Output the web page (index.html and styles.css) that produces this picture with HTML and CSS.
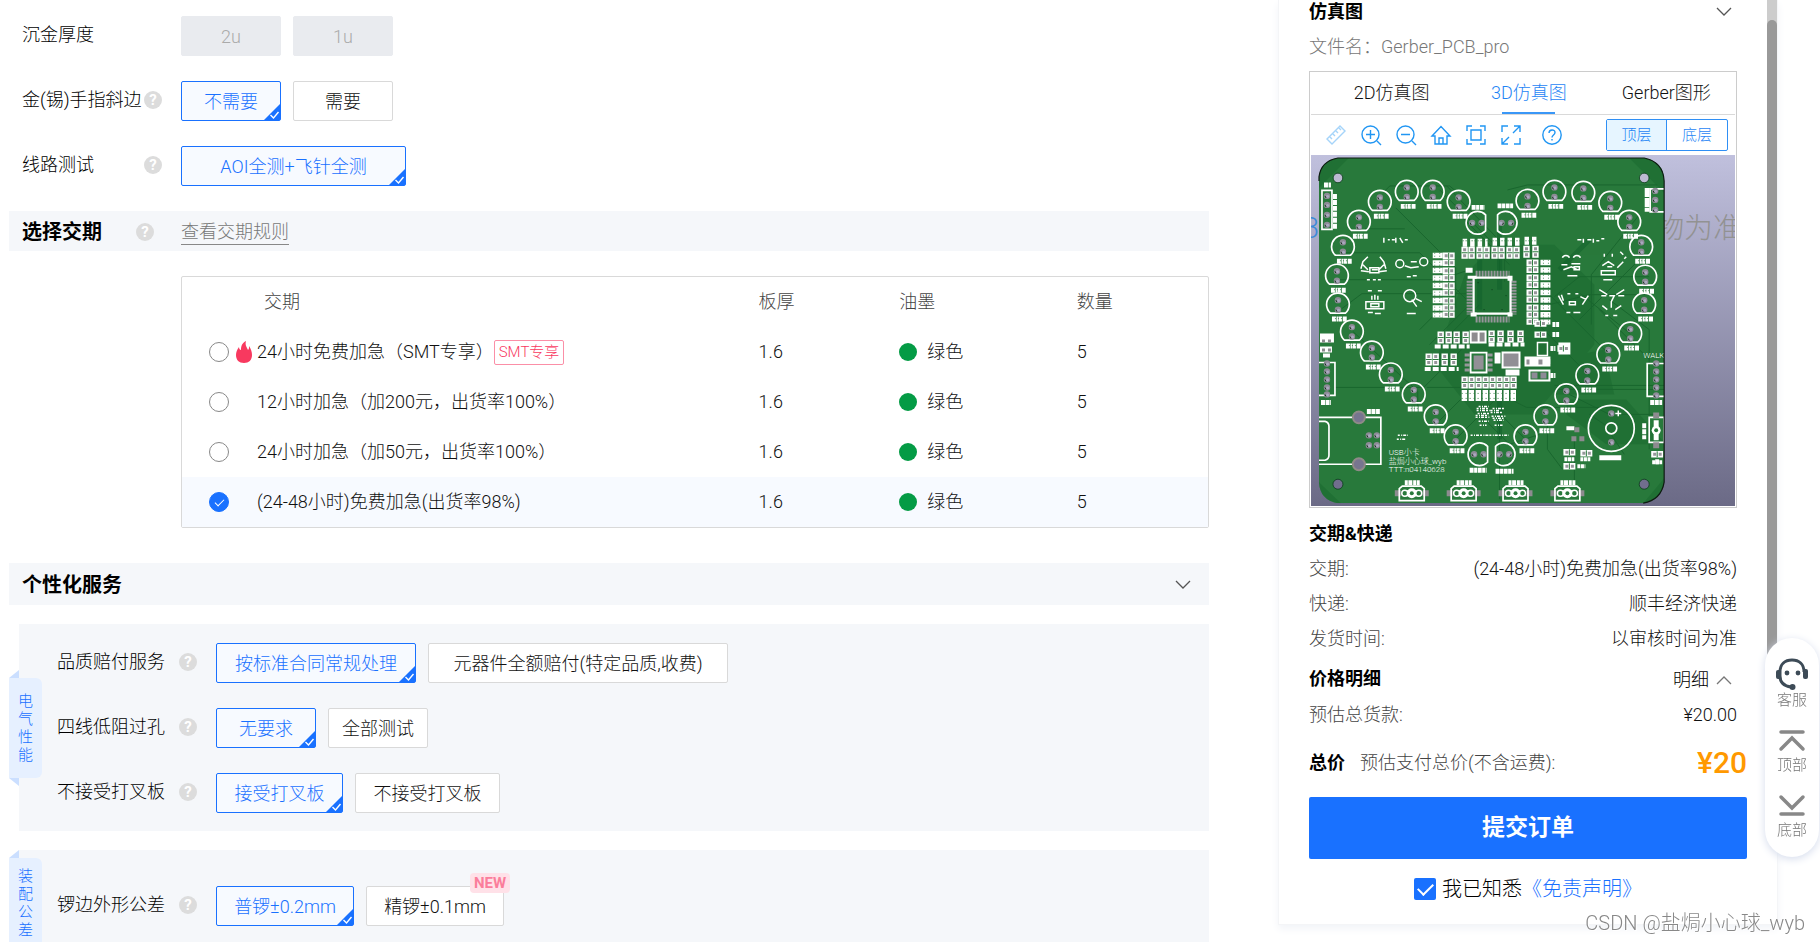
FILE: index.html
```html
<!DOCTYPE html>
<html lang="zh-CN">
<head>
<meta charset="utf-8">
<meta name="viewport" content="width=device-width, initial-scale=1">
<title>PCB 下单</title>
<link rel="stylesheet" href="styles.css">
</head>
<body>
<svg class="defs" aria-hidden="true">
  <symbol id="tick" viewBox="0 0 16 16"><path d="M16 0V16H0Z" fill="#1971ff"/><path d="M6.500 11l3 3 5-6" fill="none" stroke="#fff" stroke-width="1.400"/></symbol>
  <symbol id="down" viewBox="0 0 16 10"><path d="M1 1l7 7 7-7" fill="none" stroke="#555" stroke-width="1.300"/></symbol>
  <symbol id="up" viewBox="0 0 16 10"><path d="M1 9l7-7 7 7" fill="none" stroke="#777" stroke-width="1.300"/></symbol>
</svg>
<div class="page">
  <main class="form">
    <div class="rows">
      <div class="row">
        <div class="label"><span>沉金厚度</span></div>
        <button class="opt" disabled>2u</button><button class="opt" disabled>1u</button>
      </div>
      <div class="row">
        <div class="label"><span>金(锡)手指斜边</span><span class="tip">?</span></div>
        <button class="opt on">不需要<svg><use href="#tick"/></svg></button><button class="opt">需要</button>
      </div>
      <div class="row">
        <div class="label"><span>线路测试</span><span class="tip">?</span></div>
        <button class="opt wide on">AOI全测+飞针全测<svg><use href="#tick"/></svg></button>
      </div>
    </div>

    <div class="section first">
      <div class="heading"><h2>选择交期</h2><span class="tip">?</span></div>
      <a class="rules" href="#">查看交期规则</a>
    </div>

    <div class="lead">
      <table>
        <colgroup><col class="c1"><col class="c2"><col class="c3"><col></colgroup>
        <thead><tr><th>交期</th><th>板厚</th><th>油墨</th><th>数量</th></tr></thead>
        <tbody>
          <tr><td><label class="pick"><input type="radio" name="lead"><span class="slot"><svg class="flame" viewBox="0 0 16 22"><path d="M8 22C3 22 0 19 0 14C0 11 1 9 3 6C3 8 4 9 5 9C5 5 6 2 10 0C9 3 10 5 11 7L12 9C13 8 13 7 13 5C15 8 16 11 16 14C16 19 13 22 8 22Z" fill="#f8395f"/></svg></span>24小时免费加急（SMT专享）<span class="smt">SMT专享</span></label></td><td>1.6</td><td><span class="ink">绿色</span></td><td>5</td></tr>
          <tr><td><label class="pick"><input type="radio" name="lead"><span class="slot"></span>12小时加急（加200元，出货率100%）</label></td><td>1.6</td><td><span class="ink">绿色</span></td><td>5</td></tr>
          <tr><td><label class="pick"><input type="radio" name="lead"><span class="slot"></span>24小时加急（加50元，出货率100%）</label></td><td>1.6</td><td><span class="ink">绿色</span></td><td>5</td></tr>
          <tr class="chosen"><td><label class="pick"><input type="radio" name="lead" checked><span class="slot"></span>(24-48小时)免费加急(出货率98%)</label></td><td>1.6</td><td><span class="ink">绿色</span></td><td>5</td></tr>
        </tbody>
      </table>
    </div>

    <div class="section second">
      <h2>个性化服务</h2>
      <button class="fold" aria-label="收起"><svg class="chev"><use href="#down"/></svg></button>
    </div>

    <section class="panel">
      <div class="tag mid">电气性能</div>
      <div class="rows">
        <div class="row">
          <div class="label"><span>品质赔付服务</span><span class="tip">?</span></div>
          <button class="opt w200 on">按标准合同常规处理<svg><use href="#tick"/></svg></button><button class="opt w300">元器件全额赔付(特定品质,收费)</button>
        </div>
        <div class="row">
          <div class="label"><span>四线低阻过孔</span><span class="tip">?</span></div>
          <button class="opt on">无要求<svg><use href="#tick"/></svg></button><button class="opt">全部测试</button>
        </div>
        <div class="row">
          <div class="label"><span>不接受打叉板</span><span class="tip">?</span></div>
          <button class="opt w127 on">接受打叉板<svg><use href="#tick"/></svg></button><button class="opt w145">不接受打叉板</button>
        </div>
      </div>
    </section>

    <section class="panel tall">
      <div class="tag top">装配公差</div>
      <div class="rows">
        <div class="row">
          <div class="label"><span>锣边外形公差</span><span class="tip">?</span></div>
          <button class="opt w138 on">普锣±0.2mm<svg><use href="#tick"/></svg></button><button class="opt w138">精锣±0.1mm<span class="new">NEW</span></button>
        </div>
      </div>
    </section>
  </main>

  <aside class="card">
    <div class="bar"><div class="thumb"></div></div>
    <div class="inner">
      <div class="line"><h3>仿真图</h3><button class="fold side" aria-label="收起"><svg class="chev"><use href="#down"/></svg></button></div>
      <p class="file">文件名：Gerber_PCB_pro</p>
      <div class="viewer">
        <div class="tabs">
          <button>2D仿真图</button><button class="active">3D仿真图</button><button>Gerber图形</button>
        </div>
        <div class="tools">
          <div class="icons">
            <button class="faded" aria-label="测量"><svg viewBox="0 0 20 20"><path d="M1 14L14 1l5 5L6 19zM4 12l2 2M7 9l2 2M10 6l2 2M13 3l2 2"/></svg></button>
            <button aria-label="放大"><svg viewBox="0 0 20 20"><circle cx="9.500" cy="9.500" r="8.500"/><path d="M5 9.500h9M9.500 5v9M16 16l4 4"/></svg></button>
            <button aria-label="缩小"><svg viewBox="0 0 20 20"><circle cx="9.500" cy="9.500" r="8.500"/><path d="M5 9.500h9M16 16l4 4"/></svg></button>
            <button aria-label="首页"><svg viewBox="0 0 20 20"><path d="M1 11L10 1.500 19 11h-3v8H4v-8zM8 19v-6h4v6"/></svg></button>
            <button aria-label="适应"><svg viewBox="0 0 20 20"><path d="M1 6V1h5M14 1h5v5M19 14v5h-5M6 19H1v-5M5 5h10v10H5z"/></svg></button>
            <button aria-label="全屏"><svg viewBox="0 0 20 20"><path d="M1 7V1h6M13 1h6v6M19 13v6h-6M7 19H1v-6M19 1l-7 7M1 19l7-7"/></svg></button>
            <button class="gap" aria-label="帮助"><svg viewBox="0 0 20 20"><circle cx="10" cy="10" r="9.200"/><path d="M7 8c0-4 6-4 6-.500 0 2.500-3 2.500-3 5M10 14v1.500"/></svg></button>
          </div>
          <div class="layers"><button class="active">顶层</button><button>底层</button></div>
        </div>
        <svg class="board" viewBox="1311 155 425 352" role="img" aria-label="PCB 3D 仿真">
          <defs>
            <linearGradient id="sky" x1="0" y1="0" x2="0" y2="1"><stop offset="0" stop-color="#c0c0dd"/><stop offset="1" stop-color="#6b6a86"/></linearGradient>
            <g id="pad"><circle r="3.200" fill="#8d8b96"/><circle cx=".6" cy=".5" r="1.500" fill="#aaa8c0"/><path d="M-2 0l1 2" stroke="#18351f"/></g>
            <g id="cap"><path d="M-7.500 8.500A11.400 11.400 0 1 1 7.500 8.500Z" fill="none" stroke="#fff" stroke-width="1.700"/><use href="#pad" y="-4.500"/><use href="#pad" y="5"/></g>
            <g id="led"><use href="#cap"/><path d="M-6 14.500h15" stroke="#fff" stroke-width="5" stroke-dasharray="4 .6 2 .4 3 .8"/><path d="M-3 14h9" stroke="#28793b" stroke-width=".8" stroke-dasharray="1 2"/></g>
            <g id="ledR"><path d="M9 -8A11.400 11.400 0 1 0 9 8Z" fill="none" stroke="#fff" stroke-width="1.700"/><use href="#pad" x="-4.500"/><use href="#pad" x="5"/></g>
            <g id="resH"><path d="M-6-3.200H6V3.200H-6z" fill="#fff"/><path d="M-4-1.500h3v3h-3zM1.500-1.500h3v3h-3z" fill="#96969a"/><path d="M0-3v6" stroke="#28793b"/></g>
            <g id="resV"><path d="M-3.200-6H3.200V6H-3.200z" fill="#fff"/><path d="M-1.500-4.500h3v3h-3zM-1.500 1.500h3v3h-3z" fill="#96969a"/><path d="M-3 0h6" stroke="#28793b"/></g>
            <g id="key"><path d="M-17-3h6v6h-6zM11-3h6v6h-6z" fill="#8d8b8f"/><path d="M-12.500-4.500l3-2.500h19l3 2.500v12h-25z" fill="none" stroke="#fff" stroke-width="1.700"/><path d="M-8 0h16" stroke="#fff" stroke-width="6"/><circle cx="-7" r="3" fill="#28793b" stroke="#fff" stroke-width="1.500"/><circle r="5" fill="#fff"/><circle r="2" fill="#28793b"/><circle cx="7" r="3" fill="#28793b" stroke="#fff" stroke-width="1.500"/><path d="M-7-10.500H8" stroke="#fff" stroke-width="5" stroke-dasharray="3 .6 4 .8"/></g>
            <clipPath id="edge"><path d="M1338 158H1645Q1665 162 1665 181V483Q1662 501 1644 504H1338Q1320 501 1319 483V177Q1321 161 1338 158Z"/></clipPath>
          </defs>
          <rect x="1311" y="155" width="425" height="352" fill="url(#sky)"/>
          <text class="ghost blue" x="1303" y="238">3</text>
          <text class="ghost" x="1656" y="238">物为准</text>
          <g clip-path="url(#edge)">
            <rect x="1319" y="158" width="346" height="346" fill="#28793b"/>
            <path d="M1465 275l30-30h60l40 40v60l-60 70h-60l-40-50zM1567 400h60l40 45h-60l-40-30zM1319 158h30l-30 30zM1630 158h35v35zM1319 483l22 21h-22zM1644 504l21-25v25zM1555 360l50-10 10 45h-60z" fill="#196a30" opacity=".55"/>
            <g fill="none" stroke="#19662e" stroke-width="1">
              <path d="M1384 192l6-6h60l7 6M1396 208l60 60v40M1365 229h40M1345 253h75l50 50M1340 280h100l30-10M1342 309l20-15h110M1440 190l60 60v30M1447 186l58 60v36M1460 215l50 50M1508 190l20-5h130M1640 215l-48 60v50M1650 277h-70l-25 20M1650 295h-60l-40 10M1353 332l65 60v20M1334 388h90l50-50M1427 388h60l40 20h90M1420 330l40-40M1430 345l45-45M1435 350l45-45M1555 386h110M1555 390h110M1570 395l40 20h50M1590 376l-60-60M1610 355l-60-60M1631 334l-50-40M1580 320l60-60M1600 310l50 50M1480 415l30 30 30-10M1500 415v85M1548 420v30l15 20M1590 415l15 10 20 30M1575 440v45M1440 421l50-50M1456 440l45-45M1526 440l-30-30M1610 300l40 30v120"/>
            </g>
            <path d="M1500 220v70M1480 260v50M1590 240l-30 30M1500 390v50" stroke="#10602b" stroke-width="5" opacity=".5"/>
            <g fill="#bcbad2" stroke="#0b3b1b" stroke-width=".8"><circle cx="1338" cy="178" r="4.800"/><circle cx="1645" cy="178" r="4.800"/><g fill="#706e8d"><circle cx="1338" cy="485" r="5"/><circle cx="1645" cy="485" r="5"/></g></g>
            <use href="#led" x="1380" y="202"/><use href="#led" x="1407" y="192"/><use href="#led" x="1433" y="192"/><use href="#led" x="1459" y="202"/><use href="#led" x="1359" y="222"/><use href="#led" x="1343" y="247"/><use href="#led" x="1337" y="276"/><use href="#led" x="1338" y="305"/><use href="#led" x="1352" y="332"/><use href="#led" x="1372" y="353"/><use href="#led" x="1391" y="375"/><use href="#led" x="1414" y="395"/><use href="#led" x="1436" y="417"/><use href="#led" x="1456" y="437"/>
            <use href="#led" x="1528" y="201"/><use href="#led" x="1555" y="192"/><use href="#led" x="1584" y="193"/><use href="#led" x="1611" y="203"/><use href="#led" x="1630" y="222"/><use href="#led" x="1642" y="247"/><use href="#led" x="1646" y="277"/><use href="#led" x="1645" y="305"/><use href="#led" x="1631" y="334"/><use href="#led" x="1609" y="355"/><use href="#led" x="1588" y="376"/><use href="#led" x="1567" y="396"/><use href="#led" x="1546" y="417"/><use href="#led" x="1526" y="437"/>
            <use href="#ledR" x="1477" y="223"/><use href="#ledR" transform="translate(1507 223) scale(-1 1)"/><use href="#ledR" x="1479" y="455"/><use href="#ledR" transform="translate(1505 455) scale(-1 1)"/>
            <path d="M1472 207.500h13M1498 206h16M1470 471h17M1496 472h18" stroke="#fff" stroke-width="5" stroke-dasharray="4 .5 3 .6"/>
            <!-- left header and USB socket -->
            <g fill="none" stroke="#fff" stroke-width="1.700"><path d="M1322 190.500h10v39h-10z"/><path d="M1319 363h16v33h-16M1319 418h62v47h-62M1319 422h6q4 1 4 5v29q0 4-4 5h-6"/><path d="M1665 189h-14v23h14M1665 364h-17v33h17M1650 418h15v25h-15z"/><circle cx="1612" cy="429" r="23"/><circle cx="1612" cy="429" r="5.500"/></g>
            <path d="M1324 185h7M1321 403h10M1367 412h13M1651 403h12" stroke="#fff" stroke-width="5" stroke-dasharray="4 .6"/><path d="M1648 188v24" stroke="#fff" stroke-width="5" stroke-dasharray="9 1"/>
            <path d="M1335 194v36M1645 424v16M1658 460v6" stroke="#fff" stroke-width="4" stroke-dasharray="5 1"/>
            <path d="M1320 334h14v9h-14zM1320 347h12v6h-12zM1323 354h7v4h-7z" fill="#fff"/><path d="M1322 340h3v3h-3zM1328 340h3v3h-3zM1322 349h3v3h-3zM1328 349h3v3h-3z" fill="#8d8b8f"/>
            <use href="#pad" x="1327" y="196"/><use href="#pad" x="1327" y="205"/><use href="#pad" x="1327" y="215"/><use href="#pad" x="1327" y="225"/><use href="#pad" x="1327" y="364"/><use href="#pad" x="1327" y="372"/><use href="#pad" x="1327" y="380"/><use href="#pad" x="1327" y="388"/><use href="#pad" x="1327" y="395"/>
            <use href="#pad" x="1656" y="191"/><use href="#pad" x="1656" y="200"/><use href="#pad" x="1656" y="210"/><use href="#pad" x="1657" y="364"/><use href="#pad" x="1657" y="372"/><use href="#pad" x="1657" y="380"/><use href="#pad" x="1657" y="388"/><use href="#pad" x="1657" y="396"/>
            <g fill="#77758f" stroke="#8f8a87" stroke-width="2"><circle cx="1359" cy="418" r="6"/><circle cx="1359" cy="465" r="6"/></g>
            <use href="#pad" x="1369" y="436"/><use href="#pad" x="1377" y="436"/><use href="#pad" x="1369" y="446"/><use href="#pad" x="1377" y="446"/><use href="#pad" x="1612" y="414"/><use href="#pad" x="1612" y="443"/>
            <path d="M1616 414h6M1619 411v6" stroke="#fff" stroke-width="1.500"/><path d="M1600 458.500h22" stroke="#fff" stroke-width="5"/>
            <path d="M1654 413h6v6h-6zM1654 443h6v6h-6z" fill="#8d8b8f"/><path d="M1657 421v20" stroke="#fff" stroke-width="5"/><circle cx="1657" cy="431" r="4.500" fill="#fff"/><circle cx="1657" cy="431" r="2" fill="#28793b"/>
            <!-- microcontroller -->
            <path d="M1476 274h34M1476 320h34" stroke="#96969a" stroke-width="6" stroke-dasharray="2 1"/><path d="M1470 281v34M1514 281v34" stroke="#96969a" stroke-width="6" stroke-dasharray="2 1"/>
            <path d="M1474 278h37v36h-37z" fill="none" stroke="#fff" stroke-width="2.200"/><path d="M1468 276h9v3h-9zM1508 276h5v5h-5zM1471 313h6v4h-6zM1508 313h5v4h-5zM1466 268h7v5h-7z" fill="#fff"/>
            <path d="M1478 283h1M1492 290h1M1506 296h1M1484 310h1M1502 310h1" stroke="#0b3b1b"/>
            <!-- resistor banks -->
            <use href="#resV" x="1465" y="253"/><use href="#resV" x="1472" y="253"/><use href="#resV" x="1480" y="253"/><use href="#resV" x="1487" y="253"/><use href="#resV" x="1495" y="253"/><use href="#resV" x="1502" y="253"/><use href="#resV" x="1510" y="253"/><use href="#resV" x="1517" y="253"/><use href="#resV" x="1527" y="252"/><use href="#resV" x="1536" y="252"/>
            <path d="M1463 243h25M1493 242h28M1525 241h13" stroke="#fff" stroke-width="8" stroke-dasharray="4.500 3"/><path d="M1463 241h75" stroke="#28793b" stroke-width="1" stroke-dasharray="1 2"/>
            <g id="bank"><use href="#resH" x="1449" y="256"/><use href="#resH" x="1449" y="263"/><use href="#resH" x="1449" y="271"/><use href="#resH" x="1449" y="278"/><use href="#resH" x="1449" y="286"/><use href="#resH" x="1449" y="293"/><use href="#resH" x="1449" y="301"/><use href="#resH" x="1449" y="308"/><use href="#resH" x="1449" y="315"/></g>
            <use href="#bank" x="84" y="7"/>
            <path d="M1438 253v65M1546 260v65" stroke="#fff" stroke-width="10" stroke-dasharray="5.500 2"/><path d="M1435 253v65M1440 253v65M1544 260v65M1549 260v65" stroke="#28793b" stroke-width=".8" stroke-dasharray="1 2"/>
            <use href="#resV" x="1441" y="338"/><use href="#resV" x="1449" y="338"/><use href="#resV" x="1457" y="338"/><use href="#resV" x="1466" y="338"/><use href="#resV" x="1492" y="337"/><use href="#resV" x="1501" y="337"/><use href="#resV" x="1511" y="337"/><use href="#resV" x="1521" y="337"/>
            <use href="#resV" x="1429" y="360"/><use href="#resV" x="1436" y="360"/><use href="#resV" x="1445" y="360"/><use href="#resV" x="1454" y="360"/>
            <path d="M1435 347h35M1489 345h36M1425 369.500h34" stroke="#fff" stroke-width="4" stroke-dasharray="6 2"/>
            <path d="M1470 331h17v13h-17z" fill="#fff"/><path d="M1472 333h6v9h-6zM1480 333h5v9h-5z" fill="#8d8b8f"/>
            <path d="M1467.500 354v18M1490.500 354v18" stroke="#96969a" stroke-width="5" stroke-dasharray="3 2"/><path d="M1471 353h16v20h-16z" fill="#28793b" stroke="#fff" stroke-width="1.800"/><path d="M1474 356h10v14h-10z" fill="#929096"/>
            <path d="M1502 352h19v17h-19zM1495 353h6v11h-6zM1506 370h14v6h-14zM1525 357h26v10h-26zM1529 370h22v12h-22z" fill="#fff"/><path d="M1504 354h15v13h-15zM1527 360h3v5h-3zM1539 360h4v5h-4z" fill="#918f95"/><path d="M1531 372h18v8h-18z" fill="#28793b"/><path d="M1532 373h6v6h-6zM1541 373h6v6h-6z" fill="#8d8b96"/>
            <use href="#resH" x="1541" y="324"/><use href="#resH" x="1541" y="335"/><path d="M1538 343h10v13h-10z" fill="none" stroke="#fff" stroke-width="1.500"/><path d="M1553 325h7M1553 335h7M1551 349h5M1544 362h7M1551 376h5" stroke="#fff" stroke-width="5" stroke-dasharray="3 .7"/><path d="M1559 343h12v12h-12z" fill="#fff"/><use href="#resH" x="1564" y="349"/>
            <use href="#resV" x="1465" y="383"/><use href="#resV" x="1472" y="383"/><use href="#resV" x="1479" y="383"/><use href="#resV" x="1486" y="383"/><use href="#resV" x="1493" y="383"/><use href="#resV" x="1500" y="383"/><use href="#resV" x="1507" y="383"/><use href="#resV" x="1514" y="383"/>
            <path d="M1462 396h56" stroke="#fff" stroke-width="11" stroke-dasharray="5.500 1.500"/><path d="M1462 394h56M1462 399h56" stroke="#28793b" stroke-width=".9" stroke-dasharray="1 3"/>
            <!-- silkscreen drawings -->
            <g fill="none" stroke="#fff" stroke-width="1.500">
              <path d="M1361 269l2-7 5-5M1363 265l5 5M1361 271l8 1M1386 269l-2-7-4-5M1384 265l-5 5M1387 271l-8 1M1370 268h9v5h-9zM1372 270h6M1367 280h3M1373 280h3M1378 280h3"/><path d="M1366 302h18v7h-18zM1371 304h8v3h-8zM1372 296v4M1375 295v5M1378 296v4M1368 291h4M1378 291h4M1368 313h5M1375 314h6"/>
              <circle cx="1400" cy="264" r="4"/><circle cx="1424" cy="262" r="4"/><path d="M1405 266l6 2 8-1M1411 262h6M1407 277h4M1413 276h4"/><circle cx="1410" cy="296" r="6"/><path d="M1412 300l5 7M1416 299l6 3M1407 314h9"/>
              <path d="M1384 238v5M1388 240h2M1392 240h3M1396 238v5M1400 238l3 5M1405 240h3"/><path d="M1578 240h4M1584 239v4M1588 240h4M1594 239v4M1597 241h3M1602 239h3"/>
              <path d="M1563 258c1-3 6-3 7 0M1574 258c1-3 6-3 7 0M1562 265h6M1564 270l8-3 6 3M1572 264h9M1574 267h6v3h-6M1568 276h10"/><path d="M1603 266l6-4 6 4M1602 271h14v4h-14zM1608 267h5M1618 268l6-6M1605 254v3M1613 254v3M1621 252l3 3M1625 259l2-2M1604 280h9"/>
              <path d="M1559 296l5 9M1562 295l2 6M1589 296l-6 9M1587 300l-6-3M1568 294h3M1576 294h3M1570 302h6v3h-6zM1567 313h4M1574 313h7"/><path d="M1600 290l8 5M1602 296h5M1625 290l-8 5M1625 296h-6M1610 296h5l-3 6v6M1608 310l-5-4M1616 310l6-4M1606 316h3M1614 316h4"/>
            </g>
            <g stroke="#fff" stroke-width="1.500" fill="none" stroke-dasharray="2 1.400 1 1 3 1"><path d="M1479 407h10M1477 409h12M1477 411h15M1478 414h12M1476 416h13M1476 418h14M1479 422h10M1480 426h7M1493 409h12M1491 411h9M1491 413h12M1492 417h14M1493 419h11M1494 421h10M1495 426h8M1471 436h38M1398 436h10M1397 440h9"/></g>
            <g class="silk"><text x="1389" y="456">USB小卡</text><text x="1389" y="465">盐焗小心球_wyb</text><text x="1389" y="473">TTT:n04140628</text><text x="1644" y="359">WALK</text></g>
            <path d="M1567 427h8v4h-8z" fill="#fff"/><path d="M1575 428h5v5h-5zM1572 437h5v5h-5zM1580 437h5v5h-5z" fill="#8d8b8f"/>
            <use href="#resH" x="1570" y="453"/><use href="#resH" x="1587" y="454"/><use href="#resH" x="1570" y="467"/><path d="M1565 460h10M1581 460h10M1578 467h8M1653 463h10" stroke="#fff" stroke-width="4" stroke-dasharray="3 .6"/><use href="#resH" x="1658" y="455"/>
            <use href="#key" x="1412" y="494"/><use href="#key" x="1464" y="494"/><use href="#key" x="1516" y="494"/><use href="#key" x="1568" y="494"/>
          </g>
          <path d="M1319 181V177Q1321 161 1338 158H1645Q1664 162 1665 181V483Q1662 501 1644 504" fill="none" stroke="#0d1a10" stroke-width="1.200"/>
        </svg>
      </div>

      <h3 class="t14">交期&amp;快递</h3>
      <div class="line t11"><span class="key">交期:</span><span>(24-48小时)免费加急(出货率98%)</span></div>
      <div class="line t11"><span class="key">快递:</span><span>顺丰经济快递</span></div>
      <div class="line t11"><span class="key">发货时间:</span><span>以审核时间为准</span></div>
      <div class="line t14"><h3>价格明细</h3><button class="fold side detail">明细<svg class="chev"><use href="#up"/></svg></button></div>
      <div class="line t11"><span class="key">预估总货款:</span><span>¥20.00</span></div>
    </div>
    <div class="total"><h3>总价</h3><span class="key">预估支付总价(不含运费):</span><strong>¥20</strong></div>
    <button class="submit">提交订单</button>
    <div class="agree"><label><input type="checkbox" checked>我已知悉</label><a href="#">《免责声明》</a></div>
  </aside>
</div>

<nav class="float">
  <a href="#"><svg viewBox="0 0 32 32"><path d="M4 14C4 6 9 2 16 2s12 4 12 12" fill="none" stroke="#3d4b57" stroke-width="3"/><path d="M4 14v4c0 6 4 10 11 11" fill="none" stroke="#3d4b57" stroke-width="3"/><rect x="0" y="12" width="5" height="9" rx="2" fill="#3d4b57"/><rect x="27" y="11" width="5" height="10" rx="2" fill="#3d4b57"/><circle cx="11" cy="15" r="2.400" fill="#3d4b57"/><circle cx="22" cy="15" r="2.400" fill="#3d4b57"/><circle cx="16.500" cy="29" r="3" fill="#3d4b57"/></svg>客服</a>
  <a href="#"><svg viewBox="0 0 32 32"><path d="M5 9h22M5 26L16 15l11 11" fill="none" stroke="#888" stroke-width="3.500" stroke-linecap="round"/></svg>顶部</a>
  <a href="#"><svg viewBox="0 0 32 32"><path d="M5 26h22M5 9l11 11L27 9" fill="none" stroke="#888" stroke-width="3.500" stroke-linecap="round"/></svg>底部</a>
</nav>
<div class="credit">CSDN @盐焗小心球_wyb</div>
</body>
</html>
```

FILE: styles.css
```css
* { box-sizing: border-box; }
body {
  margin: 0;
  font: 300 18px/24px Roboto, "Noto Sans CJK SC", sans-serif;
  color: #111;
  background: #fff;
}
button { font: inherit; color: inherit; background: none; border: 0; padding: 0; cursor: pointer; }
h2, h3, p { margin: 0; }
h2 { font-size: 20px; color: #000; }
h3 { font-size: 18px; color: #000; }
a { text-decoration: none; color: #1971ff; }
.defs { position: absolute; width: 0; height: 0; }
.page {
  display: grid;
  grid-template-columns: minmax(0, 1fr) 500px;
  align-items: start;
  column-gap: 69px;
  padding: 0 42px 0 9px;
  height: 100vh;
  overflow: hidden;
}

/* form */
.form > .rows { padding: 16px 0 25px 13px; }
.rows { display: flex; flex-direction: column; gap: 25px; }
.row { display: flex; align-items: center; gap: 12px; }
.label { width: 140px; margin-right: 7px; padding-bottom: 2px; display: flex; align-items: center; justify-content: space-between; color: #000; white-space: nowrap; }
.tip { flex: none; width: 18px; height: 18px; border-radius: 50%; background: #dcdcdc; color: #fff; font-size: 15px; line-height: 18px; font-weight: 700; text-align: center; }
.opt { position: relative; width: 100px; height: 40px; padding-top: 2px; border: 1px solid #d9d9d9; border-radius: 2px; background: #fff; white-space: nowrap; }
.opt:disabled { background: #e9ebef; border-color: #e9ebef; color: #aaa; }
.opt.on { border-color: #1971ff; background: #f7faff; color: #1971ff; }
.opt svg { position: absolute; right: 0; bottom: 0; width: 16px; height: 16px; }
.wide { width: 225px; }
.w200 { width: 200px; }
.w300 { width: 300px; }
.w127 { width: 127px; }
.w145 { width: 145px; }
.w138 { width: 138px; }
.new { position: absolute; right: -7px; top: -14px; width: 40px; height: 20px; border-radius: 4px; background: #ffe1e8; color: #fb7d9b; font-size: 15px; line-height: 20px; font-weight: 700; }
.section { display: flex; align-items: center; background: #f5f7fa; padding: 2px 18px 0 13px; }
.first { height: 40px; }
.second { height: 42px; margin-top: 35px; justify-content: space-between; }
.heading { display: flex; align-items: center; justify-content: space-between; width: 132px; margin-right: 27px; }
.rules { color: #777; border-bottom: 1px solid #888; }
.fold { display: flex; align-items: center; gap: 7px; }
.chev { width: 16px; height: 10px; }

/* lead time table */
.lead { margin: 25px 0 0 172px; border: 1px solid #d9d9d9; border-radius: 2px; }
table { width: 100%; border-collapse: collapse; table-layout: fixed; }
.c1 { width: 56.2%; }
.c2 { width: 13.7%; }
.c3 { width: 17.3%; }
th, td { height: 50px; padding: 0; text-align: left; font-weight: 300; }
th { color: #444; }
th:first-child { padding-left: 82px; }
td:first-child { padding-left: 27px; }
.chosen { background: #f7faff; }
.pick { display: flex; align-items: center; }
.slot { width: 28px; display: flex; justify-content: flex-end; padding-right: 5px; }
.flame { width: 16px; height: 22px; }
.pick input { appearance: none; width: 20px; height: 20px; margin: 0; border: 1px solid #888; border-radius: 50%; background: #fff; display: grid; place-items: center; }
.pick input:checked { background: #1971ff; border-color: #1971ff; }
.pick input:checked::after { content: ""; width: 8px; height: 4px; border: solid #fff; border-width: 0 0 1px 1px; transform: translateY(-1px) rotate(-45deg); }
.smt { height: 25px; padding: 0 4px; border: 1px solid #fb8fa7; border-radius: 2px; color: #f8395f; font-size: 15px; line-height: 23px; }
.ink { display: flex; align-items: center; gap: 10px; }
.ink::before { content: ""; width: 18px; height: 18px; border-radius: 50%; background: #049b45; }

/* service panels */
.panel { position: relative; margin: 19px 0 0 10px; padding: 19px 0 18px 38px; background: #f5f7fa; }
.tall { padding: 36px 0 30px 38px; }
.tag { position: absolute; left: -10px; width: 33px; height: 100px; padding: 14px 9px; border-radius: 0 6px 6px 0; background: #e6f0ff; color: #1971ff; font-size: 15px; line-height: 18px; text-align: center; word-break: break-all; }
.tag::before, .tag::after { content: ""; position: absolute; left: 0; width: 10px; height: 8px; background: #cbdfff; }
.tag::before { top: -8px; clip-path: polygon(100% 0, 100% 100%, 0 100%); }
.tag::after { bottom: -8px; clip-path: polygon(0 0, 100% 0, 100% 100%); }
.mid { top: 54px; }
.top { top: 8px; padding-top: 9px; }

/* order card */
.card { position: relative; padding: 0 30px 23px; border: solid #f4f5f7; border-width: 0 1px 1px; box-shadow: 0 4px 8px #f2f4f8; }
.bar { position: absolute; right: 0; top: 0; width: 10px; height: 680px; padding-top: 20px; background: #ccc; }
.thumb { height: 660px; border-radius: 5px 5px 0 0; background: #999; }
.inner { margin-right: 10px; }
.line { display: flex; justify-content: space-between; align-items: center; }
.side { padding-right: 5px; }
.detail { padding-top: 3px; color: #000; }
.file { margin: 11px 0 12px; color: #777; }
.key { color: #444; }
.t11 { margin-top: 11px; }
.t14 { margin-top: 14px; }
.viewer { border: 1px solid #ccc; padding: 0 1px 1px; }
.tabs { display: grid; grid-template-columns: repeat(3, 1fr); height: 43px; padding-left: 12px; border-bottom: 1px solid #d9d9d9; }
.tabs button { position: relative; }
.tabs .active { color: #1f85f5; }
.tabs .active::after { content: ""; position: absolute; left: 50%; bottom: 0; width: 53px; height: 2px; margin-left: -27px; background: #3a97f7; }
.tools { display: flex; align-items: center; justify-content: space-between; height: 40px; padding: 0 7px 0 15px; }
.icons { display: flex; gap: 15px; }
.icons button, .icons svg { display: block; width: 20px; height: 20px; }
.icons svg { fill: none; stroke: #2196f3; stroke-width: 1.4; overflow: visible; }
.faded { opacity: .4; }
.icons .gap { margin-left: 6px; }
.layers { display: flex; border: 1px solid #2f8ff5; border-radius: 2px; color: #1f85f5; font-size: 15px; }
.layers button { width: 60px; height: 30px; }
.layers .active { border-right: 1px solid #2f8ff5; background: #e6f5ff; }
.board { display: block; width: 100%; height: auto; }
.ghost { font-size: 29px; fill: #929292; }
.blue { fill: #3c8ad8; }
.silk { font-size: 8px; fill: #fff; }
.total { display: flex; align-items: center; margin: 18px 0 16px; line-height: 36px; }
.total .key { margin-left: 15px; }
.total strong { margin-left: auto; font-size: 30px; font-weight: 500; color: #ff9900; }
.submit { width: 100%; height: 62px; border-radius: 2px; background: #1971ff; color: #fff; font-size: 23px; font-weight: 700; }
.agree { display: flex; justify-content: center; margin-top: 18px; font-size: 20px; color: #000; }
.agree label { display: flex; align-items: center; gap: 6px; }
.agree input { appearance: none; width: 22px; height: 22px; margin: 0; border-radius: 2px; background: #1971ff; display: grid; place-items: center; }
.agree input::after { content: ""; width: 13px; height: 7px; border: solid #fff; border-width: 0 0 2px 2px; transform: translateY(-2px) rotate(-45deg); }

/* floating shortcuts */
.float { position: fixed; right: 1px; top: 638px; width: 54px; height: 219px; padding-top: 20px; border-radius: 27px; background: #fff; box-shadow: 0 2px 8px #d5dcec; display: flex; flex-direction: column; gap: 13px; }
.float a { display: flex; flex-direction: column; align-items: center; font-size: 15px; line-height: 20px; color: #777; }
.float svg { width: 32px; height: 32px; }
.credit { position: fixed; right: 15px; bottom: 7px; font-size: 20px; color: #888; text-shadow: 1px 1px #fff; }
```
